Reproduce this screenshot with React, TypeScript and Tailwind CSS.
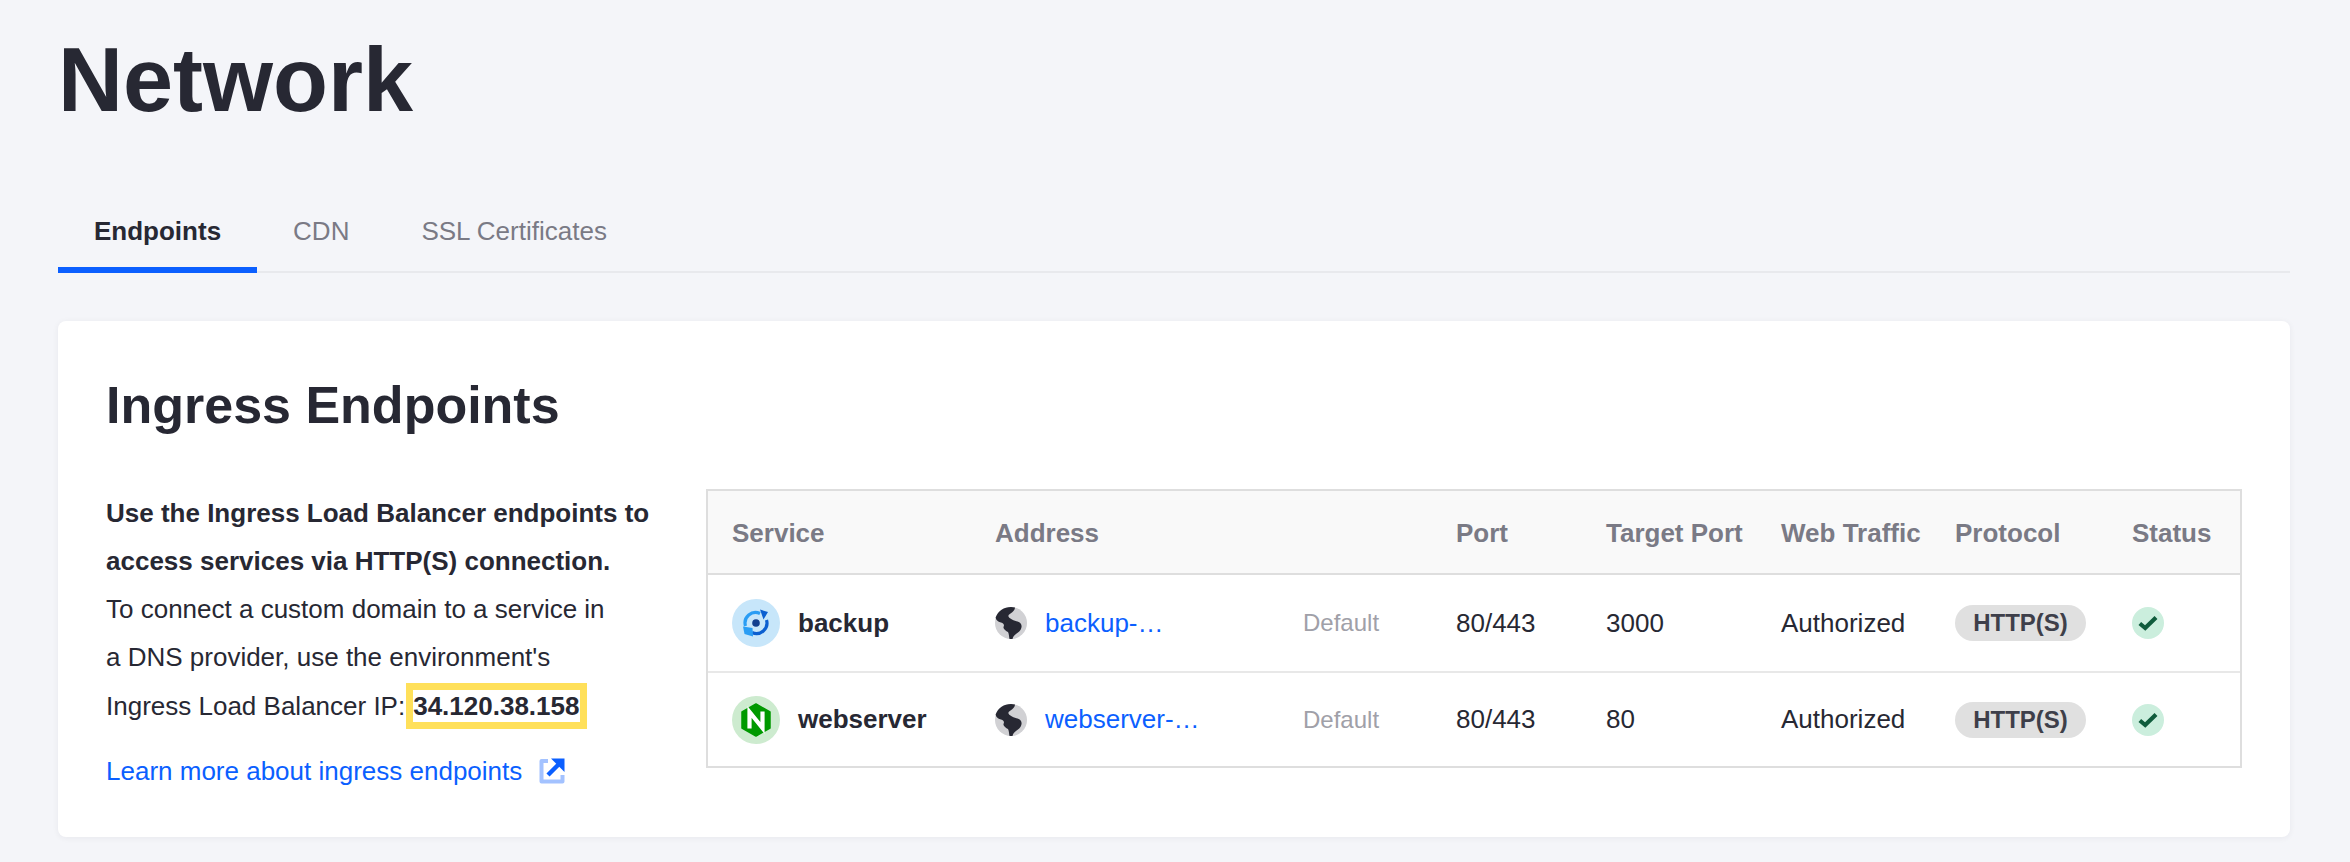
const COLUMNS = ['Service', 'Address', '', 'Port', 'Target Port', 'Web Traffic', 'Protocol', 'Status'];

const ROWS = [
  { name: 'backup', address: 'backup-…', targetPort: '3000', kind: 'backup' },
  { name: 'webserver', address: 'webserver-…', targetPort: '80', kind: 'nginx' },
];

function BackupIcon() {
  return (
    <div className="flex h-[48px] w-[48px] items-center justify-center rounded-full bg-[#c7e6fa]">
      <svg viewBox="0 0 28 28" className="h-[28px] w-[28px]" fill="none">
        <path d="M3.5 17 A10.5 10.5 0 0 1 18 4.5" stroke="#2a9df4" strokeWidth="3.2" />
        <path d="M24.5 11 A10.5 10.5 0 0 1 10 23.5" stroke="#0b5fd0" strokeWidth="3.2" />
        <path d="M18 0.5 L26 3 L21.5 10.5 Z" fill="#0b5fd0" />
        <path d="M11 27.5 L2.5 25 L1 17.5 L10.5 19 Z" fill="#2a9df4" />
        <circle cx="14" cy="14" r="3.8" fill="#123f8f" />
      </svg>
    </div>
  );
}

function NginxIcon() {
  return (
    <div className="flex h-[48px] w-[48px] items-center justify-center rounded-full bg-[#cdebcf]">
      <svg viewBox="0 0 30 34" className="h-[34px] w-[30px]">
        <path d="M15 1 L29 9 L29 25 L15 33 L1 25 L1 9 Z" fill="#009900" stroke="#009900" strokeLinejoin="round" strokeWidth="1.5" />
        <path d="M8.5 25.5 V9 L21.5 25 V8.5" fill="none" stroke="#fff" strokeWidth="4.2" />
      </svg>
    </div>
  );
}

function GlobeIcon() {
  return (
    <svg viewBox="0 0 32 32" className="h-[32px] w-[32px] shrink-0">
      <circle cx="16" cy="16" r="16" fill="#d1d1d4" />
      <path
        d="M16 0 C9 0 3 4 0.6 10.5 C1 13 2.5 14.5 6 15.5 C9 16.5 9.5 18 8.5 20 C8 22 11 24 13 25 C14 27 14 29.5 14.5 32 L17.5 32 C18 29 20 27.5 23 25.5 C26 23 27.5 20 26 17 C24 14 20 14.5 17 12.5 C13 10.5 12 8.5 15.5 6.5 C18 5 20 3 20 0.6 C18.8 0.2 17.4 0 16 0 Z"
        fill="#272833"
      />
    </svg>
  );
}

function StatusIcon() {
  return (
    <div className="flex h-[32px] w-[32px] items-center justify-center rounded-full bg-[#cbeedd]">
      <svg viewBox="0 0 20 16" className="h-[16px] w-[20px]" fill="none">
        <path d="M1.8 8.5 L7.2 13 L18 2.5" stroke="#0f5c3c" strokeWidth="4.2" />
      </svg>
    </div>
  );
}

function ExternalLinkIcon() {
  return (
    <svg viewBox="0 0 26 26" className="ml-[17px] h-[26px] w-[26px]" fill="none">
      <path d="M9 3 H2.5 V23.5 H23.5 V17" stroke="#a3c2ff" strokeWidth="4" strokeLinejoin="round" />
      <path d="M9 17 L20 6" stroke="#0b5fff" strokeWidth="4.4" />
      <path d="M12 0.5 H25.5 V14 Z" fill="#0b5fff" />
    </svg>
  );
}

export default function App() {
  return (
    <div className="h-[862px] overflow-hidden bg-[#f4f5f9] pr-[60px] pl-[58px] font-['Liberation_Sans',Arial,sans-serif] text-[26px] text-[#272833]">
      <h1 className="pt-[26px] text-[90px] leading-[108px] font-bold">Network</h1>

      <div className="mt-[59px] flex h-[80px] border-b-2 border-[#e8e9ed]">
        <div className="mb-[-2px] flex h-[80px] items-center border-b-[6px] border-[#0b5fff] px-[36px] pt-[2px] font-bold">Endpoints</div>
        <div className="flex h-[80px] items-center px-[36px] pt-[2px] pb-[6px] text-[#7a7a85]">CDN</div>
        <div className="flex h-[80px] items-center px-[36px] pt-[2px] pb-[6px] text-[#7a7a85]">SSL Certificates</div>
      </div>

      <div className="mt-[48px] h-[516px] rounded-lg bg-white px-[48px] pt-[52px] shadow-[0_1px_6px_rgba(39,40,51,0.06)]">
        <h2 className="text-[52px] leading-[64px] font-bold">Ingress Endpoints</h2>

        <div className="mt-[52px] flex items-start">
          <div className="w-[600px] shrink-0 leading-[48px]">
            <p className="font-bold">Use the Ingress Load Balancer endpoints to</p>
            <p className="font-bold">access services via HTTP(S) connection.</p>
            <p>To connect a custom domain to a service in</p>
            <p>a DNS provider, use the environment's</p>
            <p className="flex h-[48px] items-center pt-[2px]">
              Ingress Load Balancer IP:
              <span className="ml-[1px] border-[7px] border-[#ffe05a] pr-[1px] leading-[32px] font-bold">34.120.38.158</span>
            </p>
            <a className="mt-[18px] flex items-center text-[#0b5fff]">
              Learn more about ingress endpoints
              <ExternalLinkIcon />
            </a>
          </div>

          <div className="flex-1 border-2 border-[#dedede]">
            <table className="w-full table-fixed border-collapse">
              <colgroup>
                <col className="w-[263px]" />
                <col className="w-[308px]" />
                <col className="w-[153px]" />
                <col className="w-[150px]" />
                <col className="w-[175px]" />
                <col className="w-[174px]" />
                <col className="w-[177px]" />
                <col />
              </colgroup>
              <thead>
                <tr className="h-[83px] bg-[#f9f9f9] text-left text-[#7a7a85]">
                  {COLUMNS.map((col, i) => (
                    <th key={i} className="border-b-2 border-[#dedede] pt-[2px] pl-[24px] font-bold whitespace-nowrap">
                      {col}
                    </th>
                  ))}
                </tr>
              </thead>
              <tbody>
                {ROWS.map((row, i) => (
                  <tr key={row.name} className={i === 0 ? 'h-[98px] border-b-2 border-[#e8e8e8]' : 'h-[94px]'}>
                    <td className="pl-[24px]">
                      <div className="flex items-center gap-[18px] font-bold">
                        {row.kind === 'backup' ? <BackupIcon /> : <NginxIcon />}
                        {row.name}
                      </div>
                    </td>
                    <td className="pl-[24px]">
                      <div className="flex items-center gap-[18px] text-[#0b5fff]">
                        <GlobeIcon />
                        {row.address}
                      </div>
                    </td>
                    <td className="pl-[24px] text-[24px] text-[#a0a0a8]">Default</td>
                    <td className="pl-[24px]">80/443</td>
                    <td className="pl-[24px]">{row.targetPort}</td>
                    <td className="pl-[24px]">Authorized</td>
                    <td className="pl-[24px]">
                      <span className="flex h-[36px] w-[131px] items-center justify-center rounded-full bg-[#e0e0e0] text-[24px] font-bold text-[#3e3f4a]">
                        HTTP(S)
                      </span>
                    </td>
                    <td className="pl-[24px]">
                      <StatusIcon />
                    </td>
                  </tr>
                ))}
              </tbody>
            </table>
          </div>
        </div>
      </div>
    </div>
  );
}
